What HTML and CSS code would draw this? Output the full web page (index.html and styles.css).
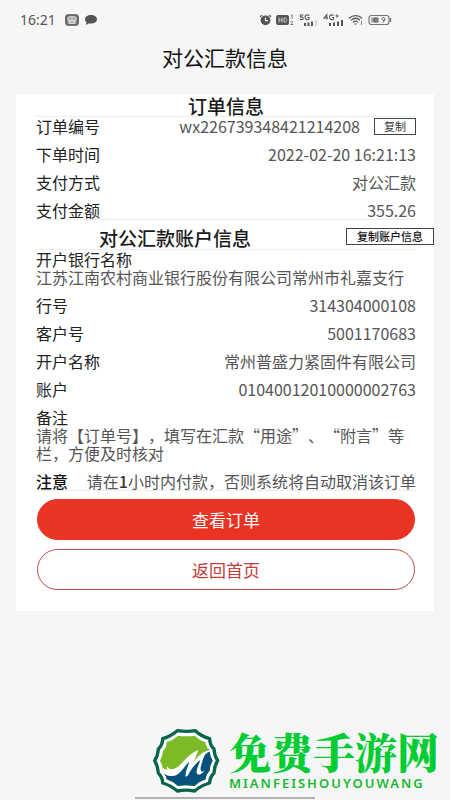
FILE: index.html
```html
<!DOCTYPE html>
<html lang="zh-CN">
<head>
<meta charset="utf-8">
<meta name="viewport" content="width=device-width, initial-scale=1">
<title>对公汇款信息</title>
<link rel="stylesheet" href="styles.css">
</head>
<body>
<div class="screen">
  <div class="status">
    <div class="status-group">
      <span class="clock">16:21</span>
      <svg width="14" height="12" viewBox="0 0 14 12"><rect x="1" y="1" width="12" height="10" rx="2.5" fill="#999" stroke="#555" stroke-width="1.6"/><path d="M3 4l2 4 2-3 2 3 2-4M4 3h6M4 9.3h6" fill="none" stroke="#eee" stroke-width="1.1"/></svg>
      <svg width="14" height="12" viewBox="0 0 14 12"><path d="M7 1c3.5 0 6 1.8 6 4.3S10.500 9.600 7 9.600L4.500 9.400 2 11l.4-2.800C1.400 7.500 1 6.500 1 5.300 1 2.800 3.500 1 7 1z" fill="#555"/></svg>
    </div>
    <div class="status-group status-right">
      <svg width="13" height="12" viewBox="0 0 13 12"><circle cx="6.500" cy="6.300" r="4.900" fill="#555"/><path d="M1 2.800l2-1.600M12 2.800l-2-1.600" stroke="#555" stroke-width="1.300"/><path d="M6.500 3.500v3.200h2.600" fill="none" stroke="#f6f6f6" stroke-width="1.200"/></svg>
      <svg width="19" height="12" viewBox="0 0 19 12"><rect x="0" y="1" width="13" height="10" rx="2" fill="#555"/><path d="M3 3.500v5M6 3.500v5M3 6h3M8 4v4h1.200c2 0 2-4 0-4z" fill="none" stroke="#ccc" stroke-width="1"/><path d="M15 1.600l1-.8v4M14.600 7.600c2-1 2.600.5 1.200 1.700l-1.200 1.200h2.600" fill="none" stroke="#666" stroke-width=".9"/></svg>
      <svg width="20" height="14" viewBox="0 0 20 14"><path d="M4.500 2H1.500v2c3-.6 3.400 2.500 1.600 2.600L1 6.400M10 2.500C8 1 6 2.300 6 4.300s2 3 4 1.800V4.500H8.300" fill="none" stroke="#555" stroke-width="1.100"/><path d="M5 10h2v3H5zM8.500 9.500h2V13h-2zM12 8.500h2V13h-2z" fill="#555"/><path d="M16.500 7h1.500v6h-1.500z" fill="#ccc"/></svg>
      <svg width="21" height="14" viewBox="0 0 21 14"><path d="M3.800 6.500V1.800L1 5h4M10.500 2.500C8.500 1 6.500 2.300 6.500 4.300s2 3 4 1.800V4.500H9M12.500 3h3M14 1.500v3" fill="none" stroke="#555" stroke-width="1.100"/><path d="M6 10h2v3H6zM10 9.500h2V13h-2zM14 8.500h2V13h-2zM18 7h2v6h-2z" fill="#555"/></svg>
      <svg width="16" height="12" viewBox="0 0 16 12"><path d="M1 4.200c4-3.500 9.500-3.500 13 0M3 6.300c3-2.500 6.500-2.500 9 0M5 8.300c1.800-1.500 3.400-1.500 5 0" fill="none" stroke="#555" stroke-width="1.300"/><path d="M7.500 11L6 9.400h3z" fill="#555"/><path d="M13.500 7v4" stroke="#888" stroke-width="1"/></svg>
      <svg width="24" height="12" viewBox="0 0 24 12"><rect x="1" y="1.500" width="20" height="9" rx="2.500" fill="none" stroke="#777" stroke-width="1.200"/><path d="M22.500 4v4" stroke="#777" stroke-width="1.400"/><path d="M3 3.500h6v5H3z" fill="#aaa"/><path d="M6 4h4v4H6zM6 6h4M16.500 6.200c-3 .8-3-2.700-1-2.700 2.300 0 1.500 4-.8 5" fill="none" stroke="#555" stroke-width="1"/></svg>
    </div>
  </div>
  <header class="title-bar"><h1>对公汇款信息</h1></header>

  <main class="card">
    <section class="section">
      <h2 class="section-title">订单信息</h2>
      <dl class="rows">
        <div class="row"><dt>订单编号</dt><dd class="with-copy">wx226739348421214208 <button class="copy" type="button">复制</button></dd></div>
        <div class="row"><dt>下单时间</dt><dd>2022-02-20 16:21:13</dd></div>
        <div class="row"><dt>支付方式</dt><dd>对公汇款</dd></div>
        <div class="row"><dt>支付金额</dt><dd>355.26</dd></div>
      </dl>
    </section>
    <section class="section">
      <div class="account-head">
        <h2 class="account-title">对公汇款账户信息</h2>
        <button class="copy copy-account" type="button">复制账户信息</button>
      </div>
      <dl class="rows">
        <div class="stack"><dt>开户银行名称</dt><dd>江苏江南农村商业银行股份有限公司常州市礼嘉支行</dd></div>
        <div class="row"><dt>行号</dt><dd>314304000108</dd></div>
        <div class="row"><dt>客户号</dt><dd>5001170683</dd></div>
        <div class="row"><dt>开户名称</dt><dd>常州普盛力紧固件有限公司</dd></div>
        <div class="row"><dt>账户</dt><dd>01040012010000002763</dd></div>
        <div class="stack"><dt>备注</dt><dd>请将【订单号】，填写在汇款“用途”、“附言”等栏，方便及时核对</dd></div>
        <div class="row"><dt class="strong">注意</dt><dd>请在<b>1</b>小时内付款，否则系统将自动取消该订单</dd></div>
      </dl>
    </section>
    <div class="actions">
      <button class="action primary" type="button">查看订单</button>
      <button class="action outline" type="button">返回首页</button>
    </div>
  </main>

  <footer class="brand">
    <svg class="brand-logo" viewBox="70 26 204 196">
      <path d="M146 33Q173 37 200 33Q218 50 243 57Q243 75 256 88Q257 108 267 123Q256 140 256 160Q243 173 243 190Q218 197 198 214Q172 209 146 214Q126 197 102 190Q102 173 89 160Q88 140 78 123Q88 108 89 88Q102 75 102 57Q126 50 146 33z" fill="#fff" stroke="#08634f" stroke-width="10" stroke-linejoin="round"/>
      <path d="M148 48Q173 52 198 48Q212 62 230 68Q232 82 243 95Q244 110 252 123Q243 137 243 153Q231 166 231 179Q212 185 197 199Q172 195 148 199Q133 185 114 179Q114 166 103 153Q102 137 94 123Q102 110 103 95Q114 82 114 68Q133 62 148 48z" fill="#7dba28"/>
      <path d="M106 164c28 6 45-12 65-41l19-20 2 25 49-40 2 7Q244 110 252 123Q243 137 243 153Q231 166 231 179Q212 185 197 199Q172 195 148 199Q133 185 114 179Q114 171 106 164z" fill="#07527c"/>
      <path d="M101 143c5 5 7 7 13 7l2-10c4 7 8 10 15 9 20-4 33-26 52-42 8-7 17-12 26-16-5 13-9 23-12 34 12-17 26-29 44-34l5 3c-13 5-19 12-22 22-4 14-11 30-7 38 3 5 6 1 10-2-5 12-20 18-23 7-2-8 7-25 11-38-16 11-28 28-38 47l-7 3c1-18 8-31 12-45-18 16-29 47-58 43-12-1-19-5-23-26z" fill="#fff"/>
    </svg>
    <div class="brand-text">
      <span class="brand-name">免费手游网</span>
      <span class="brand-latin">MIANFEISHOUYOUWANG</span>
    </div>
  </footer>
  <div class="home-bar"></div>
</div>
</body>
</html>
```
FILE: styles.css
```css
* {
  box-sizing: border-box;
}

body {
  margin: 0;
  background: #f6f6f6;
  color: #222;
  font-family: "Noto Sans CJK SC", "Noto Sans", sans-serif;
  font-size: 16px;
  line-height: 18px;
  text-spacing-trim: space-all;
}

h1, h2, dl, dd {
  margin: 0;
}

button {
  font-family: inherit;
  padding: 0;
  cursor: pointer;
}

.screen {
  position: relative;
  display: flex;
  flex-direction: column;
  min-height: 100vh;
}

.status {
  display: flex;
  justify-content: space-between;
  align-items: center;
  height: 40px;
  padding: 0 58px 0 20px;
  color: #555;
}

.status-group {
  display: flex;
  align-items: center;
  gap: 5px;
}

.status-right {
  gap: 4px;
}

.clock {
  margin-right: 4px;
  font-family: "Noto Sans", sans-serif;
  font-size: 14px;
}

.title-bar {
  height: 54px;
  padding-top: 3px;
  text-align: center;
}

.title-bar h1 {
  color: #111;
  font-size: 21px;
  font-weight: 400;
  line-height: 28px;
}

.card {
  margin: 0 16px;
  padding: 0 18px 21px 20px;
  background: #fff;
}

.section {
  border-bottom: 1px solid #eee;
}

.section-title,
.account-title {
  color: #1a1a1a;
  font-size: 19px;
  font-weight: 500;
  text-align: center;
}

.section-title {
  height: 23px;
  border-bottom: 1px solid #eee;
  line-height: 23px;
}

.account-head {
  position: relative;
  height: 30px;
  border-bottom: 1px solid #eee;
}

.account-title {
  padding-right: 102px;
  line-height: 36px;
}

.rows {
  display: flex;
  flex-direction: column;
  gap: 10px;
}

.row {
  display: flex;
  justify-content: space-between;
  height: 18px;
}

dd {
  color: #555;
}

dd b {
  color: #333;
  font-weight: 500;
}

.strong {
  color: #111;
  font-weight: 500;
}

.with-copy {
  display: flex;
  align-items: center;
  gap: 14px;
}

.copy {
  width: 42px;
  height: 17px;
  border: 1px solid #444;
  background: #fff;
  color: #333;
  font-size: 11px;
  line-height: 15px;
}

.copy-account {
  position: absolute;
  top: 8px;
  right: -18px;
  width: 88px;
  color: #111;
  font-weight: 500;
}

.actions {
  display: flex;
  flex-direction: column;
  gap: 9px;
  padding: 8px 1px 0;
}

.action {
  height: 41px;
  border: 1px solid #e93323;
  border-radius: 21px;
  font-size: 17px;
}

.primary {
  background: #e93323;
  color: #fff;
}

.outline {
  border-color: #b94a48;
  background: #fff;
  color: #c43c38;
}

.brand {
  display: flex;
  justify-content: flex-end;
  align-items: center;
  gap: 9px;
  margin-top: auto;
  padding: 0 11px 6px 0;
}

.brand-logo {
  width: 68px;
  height: 66px;
}

.brand-text {
  display: flex;
  flex-direction: column;
}

.brand-name {
  color: #00cc33;
  font-family: "Noto Serif CJK SC", "Noto Sans CJK SC", serif;
  font-size: 42px;
  font-weight: 900;
  line-height: 44px;
}

.brand-latin {
  color: #19b832;
  font-family: "Noto Sans", sans-serif;
  font-size: 13px;
  font-weight: 600;
  letter-spacing: 2px;
  line-height: 20px;
}

.home-bar {
  position: absolute;
  bottom: 1px;
  left: 30%;
  right: 30%;
  height: 2px;
  background: #b3b3b3;
}
```
